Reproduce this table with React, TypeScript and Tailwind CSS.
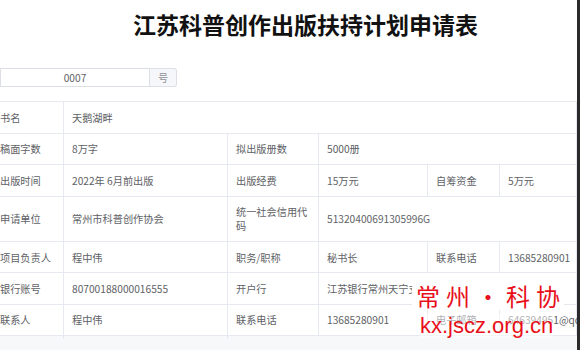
const cell = 'flex items-center px-[8px] pt-[1px] border-r border-b border-[#e6e9f0] leading-[14px]';

type Cell = { text: string; span?: string };

const rows: Cell[][] = [
  [{ text: '书名' }, { text: '天鹅湖畔', span: 'col-span-5' }],
  [{ text: '稿面字数' }, { text: '8万字' }, { text: '拟出版册数' }, { text: '5000册', span: 'col-span-3' }],
  [
    { text: '出版时间' },
    { text: '2022年 6月前出版' },
    { text: '出版经费' },
    { text: '15万元' },
    { text: '自筹资金' },
    { text: '5万元' },
  ],
  [
    { text: '申请单位' },
    { text: '常州市科普创作协会' },
    { text: '统一社会信用代码' },
    { text: '51320400691305996G', span: 'col-span-3' },
  ],
  [
    { text: '项目负责人' },
    { text: '程中伟' },
    { text: '职务/职称' },
    { text: '秘书长' },
    { text: '联系电话' },
    { text: '13685280901' },
  ],
  [
    { text: '银行账号' },
    { text: '80700188000016555' },
    { text: '开户行' },
    { text: '江苏银行常州天宁支行', span: 'col-span-3' },
  ],
  [
    { text: '联系人' },
    { text: '程中伟' },
    { text: '联系电话' },
    { text: '13685280901' },
    { text: '电子邮箱' },
    { text: '646394951@qq.com' },
  ],
];

export default function App() {
  return (
    <div className="relative flex w-[580px] h-[350px] overflow-hidden bg-white font-['Noto_Sans_CJK_SC',sans-serif] text-[#606266]">
      <div className="flex-1 min-w-0 flex flex-col">
        {/* title */}
        <h1 className="pt-[9px] pl-[34px] text-center text-[23px] leading-[30px] font-bold text-[#111]">
          江苏科普创作出版扶持计划申请表
        </h1>

        {/* number input */}
        <div className="mt-[29px] flex h-[24px] w-[177px] text-[10.2px]">
          <div className="flex-1 flex items-center justify-center pt-[1px] border border-[#dcdfe6] bg-white">0007</div>
          <div className="w-[27px] flex items-center justify-center pt-[1px] border border-l-0 border-[#dcdfe6] bg-[#f5f7fa] text-[#909399] rounded-r-[3px]">
            号
          </div>
        </div>

        {/* form table */}
        <div className="mt-[14px] -ml-[8px] grid grid-cols-[72px_164px_91px_109px_72px_77px] grid-rows-[31.5px_31.5px_31.5px_45.5px_31px_31.5px_31.5px_14px] border-t border-[#e6e9f0] text-[10.2px]">
          {rows.map((row, i) =>
            row.map((c, j) => (
              <div key={`${i}-${j}`} className={`${cell} ${c.span ?? ''}`}>
                {c.text}
              </div>
            ))
          )}
          <div className="col-span-6 grid grid-cols-[72px_164px_91px_109px_72px_77px] bg-[#f7f8fa]">
            <div className="border-r border-[#e6e9f0] h-[3px]" />
            <div className="border-r border-[#e6e9f0] h-[3px]" />
          </div>
        </div>
      </div>

      {/* scrollbar edge */}
      <div className="w-[3px] bg-[#2a2a2a]" />

      {/* watermark */}
      <div className="absolute left-[412px] top-[282px] flex flex-col items-start text-[#e8101a]">
        <div className="flex gap-[6px] bg-white pl-[4px] pr-[4px] h-[28px] items-center text-[24px] leading-[24px]">
          <span>常</span>
          <span>州</span>
          <span className="w-[24px] text-center">·</span>
          <span>科</span>
          <span>协</span>
        </div>
        <div className="mt-[4px] ml-[8px] bg-white/50 font-['Liberation_Sans',sans-serif] text-[22px] leading-[24px]">
          kx.jscz.org.cn
        </div>
      </div>
    </div>
  );
}
